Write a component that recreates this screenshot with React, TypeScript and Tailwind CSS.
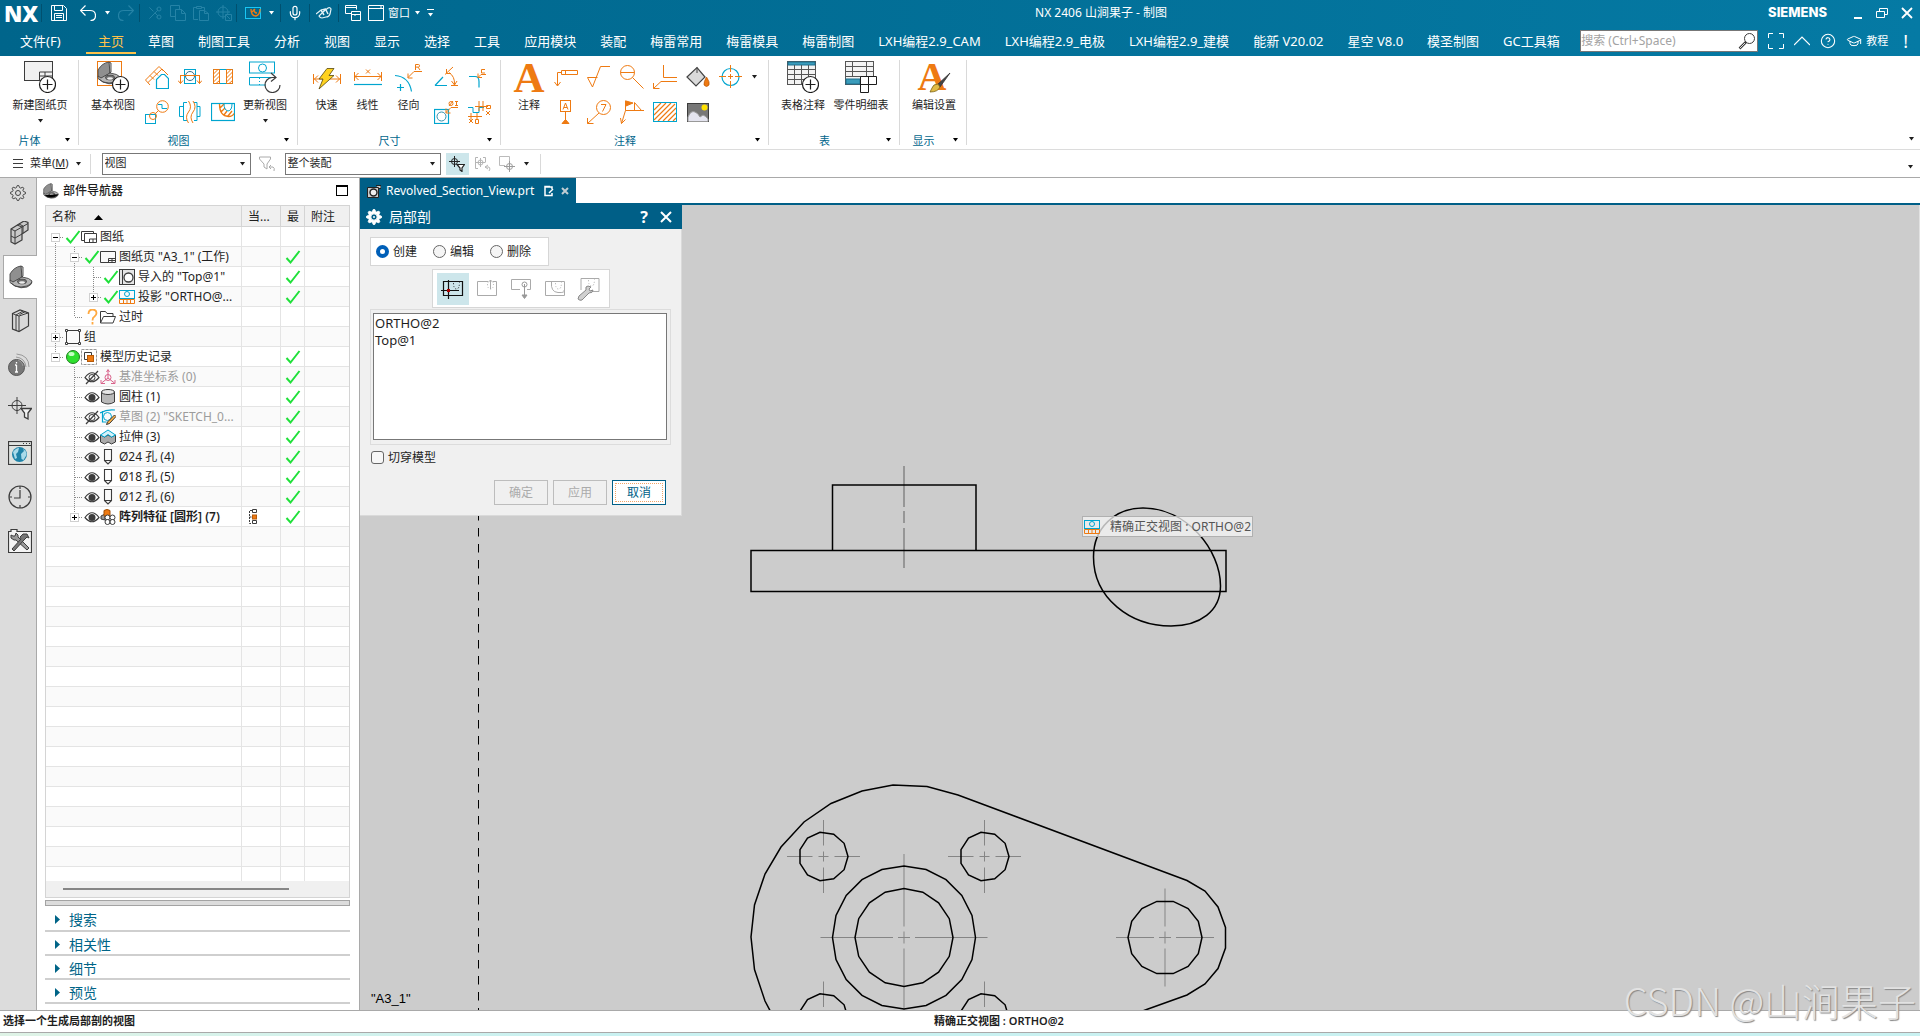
import React, { useState } from 'react';
import { Scissors, Mic, GraduationCap, CircleHelp } from 'lucide-react';

const ORANGE = '#ee7a12';
const BLUE = '#00a5cf';
const DARK = '#3c3c3c';

type SvgProps = { w?: number; h?: number; c?: string; className?: string; children: React.ReactNode };

const Svg: React.FC<SvgProps> = ({ w = 24, h = 24, c = DARK, className, children }) => (
  <svg width={w} height={h} viewBox={`0 0 ${w} ${h}`} fill="none" stroke={c} className={className ?? 'shrink-0'} aria-hidden="true">
    {children}
  </svg>
);

const Arrow: React.FC<{ className?: string }> = ({ className }) => (
  <svg width="7" height="4" viewBox="0 0 7 4" className={`shrink-0 ${className ?? ''}`} aria-hidden="true">
    <path d="M1 0h5L3.5 3.5z" fill="currentColor" />
  </svg>
);

// eight-toothed cog outline around (8, 8)
const cogPoints = Array.from({ length: 32 }, (_, i) => {
  const a = ((i - 0.5) * Math.PI) / 16;
  const r = i % 4 < 2 ? 7.5 : 5.6;
  return `${(8 + r * Math.cos(a)).toFixed(1)},${(8 + r * Math.sin(a)).toFixed(1)}`;
}).join(' ');

const Gear: React.FC<{ solid?: boolean }> = ({ solid }) => (
  <Svg w={16} h={16} c="currentColor">
    <polygon points={cogPoints} fill={solid ? 'currentColor' : 'none'} />
    <circle cx="8" cy="8" r={solid ? 3.2 : 2.5} fill={solid ? '#005f87' : 'none'} />
    {solid && <circle cx="8" cy="8" r="1" fill="currentColor" stroke="none" />}
  </Svg>
);

const PartShape: React.FC = () => (
  <g stroke="#444" strokeWidth="0.9" strokeLinejoin="round">
    <path d="M1 9Q5 2 12 1l1 1v10L4 17.5l-3-2z" fill="#8f8f8f" />
    <path d="M12 1l2 1v9l-1 1z" fill="#d5d5d5" />
    <path d="M1 15l3 2 9-5q8 1 10 4 0 4-5 6-6 2-12-1l-5-3.5z" fill="#b5b5b5" />
    <ellipse cx="13" cy="16.5" rx="4.5" ry="2.3" fill="#707070" />
    <ellipse cx="13" cy="17.5" rx="3" ry="1.2" fill="#eee" stroke="none" />
    <path d="M2 18l4 3q6 2 12 0 5-2 5-4" />
  </g>
);

const PlusCircle: React.FC = () => (
  <g stroke="#1c1c1c" strokeWidth="1.2">
    <circle cx="23.5" cy="23.5" r="8" fill="#fff" />
    <path d="M18.5 23.5h10M23.5 18.5v10" />
  </g>
);

/* ---------- ribbon icons ---------- */

const NewSheetIcon = () => (
  <Svg w={32} h={32}>
    <rect x=".5" y=".5" width="28" height="19" fill="#f1f1f1" />
    <path d="M15.5 19v-8h13M15.5 15h13M21 11v8" />
    <PlusCircle />
  </Svg>
);

const BaseViewIcon = () => (
  <Svg w={32} h={32}>
    <rect x=".5" y=".5" width="24" height="24" stroke={ORANGE} fill="#fff" />
    <PartShape />
    <PlusCircle />
  </Svg>
);

const UpdateViewIcon = () => (
  <Svg w={32} h={32} c={BLUE}>
    <rect x=".5" y="1" width="25" height="11" />
    <circle cx="13.5" cy="7" r="4" />
    <path d="M22 16.5H.5V24H17M10.5 17v1m0 2v1m0 2v1" />
    <path d="M27 16.5H23A7.5 7.5 0 1 0 31 24M22 12l5 4.5-5 4" stroke={DARK} strokeWidth="1.2" />
  </Svg>
);

const viewIcons = [
  <Svg key="a">
    <path d="M.5 15L14 1.5l4.5 4.5M.5 15l4.5 5M5 10.5l4 4M9 6.5l4 4M3 17.5L17 4l6 6" stroke={ORANGE} />
    <path d="M11.5 23.5v-9l5-5h3l4 4v10z" stroke={BLUE} fill="#fff" strokeWidth="1.2" />
  </Svg>,
  <Svg key="b">
    <rect x="6.5" y="4.5" width="11" height="14" stroke={BLUE} />
    <circle cx="12" cy="11" r="4.5" stroke="#2f6f8c" />
    <path d="M2 10.5h20M2.5 10.500v8m-2.500-3l2.500 3 2.500-3M21.500 10.500v8m-2.500-3l2.500 3 2.500-3" stroke={ORANGE} />
  </Svg>,
  <Svg key="c">
    <rect x="2.5" y="4.5" width="19" height="14" stroke={BLUE} />
    <path d="M2.5 4.5h6v14h-6zM15.5 4.5h6v14h-6zM2.5 9L7 4.5M2.5 13l6-6M2.5 17l6-6M5 18.5l3.5-3M15.5 9L20 4.500M15.5 13l6-6M15.5 17l6-6M18 18.500l3.500-3" stroke={ORANGE} />
  </Svg>,
  <Svg key="d">
    <rect x=".5" y="14.5" width="10" height="9" stroke={BLUE} />
    <circle cx="8" cy="16" r="3.5" stroke={ORANGE} />
    <circle cx="17.5" cy="6.5" r="5.8" stroke={ORANGE} />
    <path d="M10.5 13.5l3-3" stroke={ORANGE} />
    <path d="M13 4.5h4v4h5" stroke={BLUE} />
  </Svg>,
  <Svg key="e">
    <path d="M9 2.5H5.5v18H9M5.5 6.5h-4v10h4M16 2.5h3v18h-3M19 6.5h3v10h-3" stroke={BLUE} />
    <path d="M10.5 1q4 6 0 11t0 11M15 1q4 6 0 11t0 11" stroke={ORANGE} />
  </Svg>,
  <Svg key="f">
    <rect x=".5" y="3.500" width="23" height="17" stroke={BLUE} strokeWidth="1.200" />
    <path d="M8.500 4q0 12 9 12.500 4 0 5.500-3M9 8l4-4M10 12l4-4M13 15l3-4M17 16l4-5" stroke={ORANGE} strokeWidth="1.300" />
    <path d="M13 4q0 6 4 7 4-.5 4-7" stroke={BLUE} />
  </Svg>,
];

const RapidIcon = () => (
  <Svg w={28} h={32} c={ORANGE}>
    <path d="M.5 13v10M27.5 13v10M1 18h26M5 14.5L1.5 18 5 21.5M23 14.5l3.5 3.5-3.5 3.5" />
    <path d="M14 7.5h7l-5 7h5L6 28l4-10H6z" fill="#ffd21f" stroke="#55480f" strokeWidth=".8" />
  </Svg>
);

const LinearIcon = () => (
  <Svg w={28} h={32} c={ORANGE}>
    <path d="M.5 11v9M27.5 11v9M1 15.5h26M4.5 12L1 15.5 4.5 19M23.5 12l3.5 3.5-3.5 3.5M12 8.5l4 4M16 8.5l-4 4" />
    <path d="M0 23.5h28" stroke={BLUE} strokeWidth="1.2" />
  </Svg>
);

const RadialIcon = () => (
  <Svg w={28} h={32} c={ORANGE}>
    <path d="M27 10.5h-8l-6 6M13 12.5V17h4.5M20.500 9V3.500h3q1 0 1 1.300t-1 1.300h-3m2.500 0L25 9" />
    <path d="M0 14.5q14 1 16.500 16M2 26.500h7M5.500 23v7" stroke={BLUE} strokeWidth="1.2" />
  </Svg>
);

const dimensionIcons = [
  <Svg key="a" c={ORANGE}>
    <path d="M1 20.5h12M1 20.5L9 12" stroke={BLUE} strokeWidth="1.2" />
    <path d="M11 9.5L19 2M12.5 4v4.500H17M17 20.500h7M15 7.500q6 4 5.500 12M17.500 16l3 4 2.500-4" />
  </Svg>,
  <Svg key="b" c={ORANGE}>
    <path d="M2 11.5h6q4 0 4 5v6" stroke={BLUE} strokeWidth="1.2" />
    <path d="M19 9.500h-5l-3 3M11 8.500v4h4M18 4.500h-3.500v3.500H18" />
  </Svg>,
  <Svg key="c" c={ORANGE}>
    <rect x=".5" y="9.5" width="14" height="14" stroke={BLUE} strokeWidth="1.2" />
    <circle cx="7.5" cy="16.5" r="4.5" stroke="#2f8fae" />
    <path d="M24 7.5h-7l-5 5M12 8.500V13h4.500M21 1.500h3M22.500 1.500v4M21 5.500h3M15 6l4-5" />
    <circle cx="17" cy="3.500" r="2" />
  </Svg>,
  <Svg key="d" c={ORANGE}>
    <path d="M1 7.5h5v5h6v-5h5" stroke={BLUE} />
    <path d="M12 1v10M8 6.5h13M16 1v10M1 16.5h14M4 13v7M10 13v7M2 19l4 4M6 19l-4 4M8.5 19.500h3v4h-3zM19.500 5.500h4v3h-4zM19 11l4 4M23 11l-4 4" />
  </Svg>,
];

const BigAIcon = () => (
  <svg width="32" height="32" viewBox="0 0 32 32" className="shrink-0 overflow-visible" aria-hidden="true">
    <text x="16" y="31" fontSize="43" textAnchor="middle" fill={ORANGE} className="font-['Liberation_Serif',serif] font-bold">A</text>
  </svg>
);

const noteIcons = [
  <Svg key="a" c={ORANGE}>
    <path d="M7.5 5.5h16v4h-16zM11.5 5.5v4M7.5 7.500h-4v13M.5 17l3 4 3-4" />
  </Svg>,
  <Svg key="b" c={ORANGE}>
    <path d="M.5 12.500h10M.5 12.500L5.500 22l8-20.500H23" />
  </Svg>,
  <Svg key="c" c={ORANGE}>
    <circle cx="7.5" cy="7.5" r="7" />
    <path d="M.5 7.5h14M12.5 12.500l11 11" />
  </Svg>,
  <Svg key="d" c={ORANGE}>
    <path d="M10.5 0v12.500H24M24 16.500H8l-7.500 7M.5 18v5.500h6" />
  </Svg>,
  <Svg key="e" c="#444">
    <path d="M1 12l10-9.500 8 9.500-9 9z" fill="#d9d9d9" strokeWidth="1.2" />
    <path d="M11 8V2.500" />
    <path d="M20.500 12q3.500 5 2.500 8-2.500 3-5 0-.5-3 2.500-8z" fill={ORANGE} stroke="#b9570a" strokeWidth=".7" />
  </Svg>,
  <Svg key="f" c={ORANGE}>
    <circle cx="11.5" cy="12" r="8.500" stroke={BLUE} strokeWidth="1.2" />
    <path d="M11.5 0v7M11.5 16v7M0 11.500h7M16 11.500h7M11.500 9v5M9 11.500h5" />
  </Svg>,
  <Svg key="g" c={ORANGE}>
    <rect x="6.5" y=".5" width="10" height="11" />
    <path d="M11.5 11.500v9M9 9.500l2.500-6.500L14 9.500M10 7.500h3" />
    <path d="M8 23.500l3.500-4 3.500 4z" fill={ORANGE} />
  </Svg>,
  <Svg key="h" c={ORANGE}>
    <circle cx="16.500" cy="7.500" r="7" />
    <path d="M12 13L.5 23.500M.5 18v5.500h6M14 4.500h5L15.500 11.500" />
  </Svg>,
  <Svg key="i" c={ORANGE}>
    <path d="M6 1l7 2-7 3z" fill={ORANGE} />
    <path d="M5.500 .5v10l-4 13M.5 18l1 5.500 4-4M5.500 10.500H24M14.500 10V2.500l7 8" />
  </Svg>,
  <Svg key="j" c={ORANGE}>
    <path d="M1 10l7-7M1 15L13 3M1 20L18 3M5 21L22 4M10 21L23 8M15 21l8-8M20 21l3-3" strokeWidth="1.100" />
    <rect x=".5" y="2.500" width="23" height="19" stroke={BLUE} />
  </Svg>,
  <Svg key="k">
    <rect x="1.500" y="3.500" width="21" height="18" fill="#777" />
    <path d="M2 17q3-7 7-5 3 1 5 5l3-2q3 1 5 4v2.500H2z" fill="#e4e4ef" stroke="#999" />
    <circle cx="18.500" cy="7.500" r="3" fill="#ffe100" stroke="none" />
  </Svg>,
];

const TableNoteIcon = () => (
  <Svg w={32} h={32} c="#555">
    <rect x=".5" y=".5" width="28" height="23" fill="#f3f3f3" />
    <rect x="1" y="1" width="27" height="3" fill="#3a9cbb" stroke="#1d6f8e" />
    <path d="M1 8.500h28M1 13.500h28M1 18.500h28M7.500 4v19M14.500 4v19M21.500 4v19" />
    <PlusCircle />
  </Svg>
);

const PartsListIcon = () => (
  <Svg w={32} h={32} c="#555">
    <rect x=".5" y=".5" width="28" height="23" fill="#f3f3f3" />
    <path d="M1 5.500h28M1 10.500h28M1 15.500h28M7.500 0v16M21.500 0v16" />
    <rect x="1" y="18" width="14" height="5" fill="#3a9cbb" stroke="#1d6f8e" />
    <path d="M15.500 15.500h16v8h-8v8h-8zM15.500 23.500h8M23.500 15.500v8" stroke="#1c1c1c" fill="#fff" />
  </Svg>
);

const EditSettingsIcon = () => (
  <svg width="32" height="32" viewBox="0 0 32 32" className="shrink-0 overflow-visible" aria-hidden="true">
    <text x="14" y="29" fontSize="40" textAnchor="middle" fill={ORANGE} className="font-['Liberation_Serif',serif] font-bold">A</text>
    <path d="M32 12L19 24l3 2z" fill="#444" stroke="#333" strokeWidth=".8" />
    <path d="M20 23q-5 0-6 4l-2 4q8 0 10-5z" fill="#e0bb45" stroke="#7a6215" strokeWidth=".8" />
  </svg>
);

/* ---------- ribbon ---------- */

const BigButton: React.FC<{ icon: React.ReactNode; label: string; width: string; menu?: boolean }> = ({ icon, label, width, menu }) => (
  <button type="button" className={`flex shrink-0 flex-col items-center ${width}`}>
    {icon}
    <span className="mt-1 whitespace-nowrap text-[11px] leading-4">{label}</span>
    {menu && <Arrow className="mt-1.5" />}
  </button>
);

const IconGrid: React.FC<{ icons: React.ReactNode[]; cols: string }> = ({ icons, cols }) => (
  <div className={`grid content-start gap-y-[11px] pt-1 ${cols}`}>
    {icons.map((icon, i) => (
      <button key={i} type="button" className="flex w-[33px] justify-center">{icon}</button>
    ))}
  </div>
);

const Group: React.FC<{ title: string; width: string; children: React.ReactNode }> = ({ title, width, children }) => (
  <section className={`my-1 flex shrink-0 flex-col border-r border-[#d9d9d9] ${width}`}>
    <div className="flex flex-1 pt-px">{children}</div>
    <div className="flex h-2.5 items-center text-[11px] leading-none text-[#00668c]">
      <span className="flex-1 text-center">{title}</span>
      <button type="button" className="mr-[3px] flex h-2.5 w-4 items-center justify-center text-black" aria-label={title}>
        <Arrow />
      </button>
    </div>
  </section>
);

const Ribbon: React.FC = () => (
  <div className="flex h-[94px] border-b border-[#dcdcdc] bg-white">
    <Group title="片体" width="w-[79px]">
      <BigButton icon={<NewSheetIcon />} label="新建图纸页" width="w-20" menu />
    </Group>
    <Group title="视图" width="w-[219px] [&>div:first-child]:pl-[7px]">
      <BigButton icon={<BaseViewIcon />} label="基本视图" width="w-[54px]" />
      <IconGrid icons={viewIcons} cols="grid-cols-3" />
      <BigButton icon={<UpdateViewIcon />} label="更新视图" width="w-[52px]" menu />
    </Group>
    <Group title="尺寸" width="w-[203px] [&>div:first-child]:pl-2">
      <BigButton icon={<RapidIcon />} label="快速" width="w-[41px]" />
      <BigButton icon={<LinearIcon />} label="线性" width="w-[41px]" />
      <BigButton icon={<RadialIcon />} label="径向" width="w-[41px]" />
      <IconGrid icons={dimensionIcons} cols="grid-cols-2" />
    </Group>
    <Group title="注释" width="w-[268px] [&>div:first-child]:pl-2">
      <BigButton icon={<BigAIcon />} label="注释" width="w-10" />
      <IconGrid icons={noteIcons} cols="grid-cols-6" />
      <button type="button" className="flex h-8 w-[14px] items-center justify-center" aria-label="更多"><Arrow /></button>
    </Group>
    <Group title="表" width="w-[131px] [&>div:first-child]:pl-[5px]">
      <BigButton icon={<TableNoteIcon />} label="表格注释" width="w-[58px]" />
      <BigButton icon={<PartsListIcon />} label="零件明细表" width="w-[58px]" />
    </Group>
    <Group title="显示" width="w-[67px] [&>div:first-child]:pl-[5px]">
      <BigButton icon={<EditSettingsIcon />} label="编辑设置" width="w-[58px]" />
    </Group>
    <button type="button" className="mr-[5px] mb-2 ml-auto self-end" aria-label="功能区选项"><Arrow /></button>
  </div>
);

/* ---------- title bar ---------- */

const Sep: React.FC<{ className: string }> = ({ className }) => <span className={`h-[18px] w-px shrink-0 bg-[#00506f] ${className}`} />;

const TitleBar: React.FC = () => (
  <div className="flex h-[26px] items-center text-white">
    <span className="ml-1 w-8 font-['Open_Sans',sans-serif] text-[22px] leading-6 font-extrabold">NX</span>
    <Sep className="ml-[5px]" />
    <button type="button" className="ml-[9px]" aria-label="保存">
      <Svg w={16} h={16} c="#fff"><path d="M.5 .5h12l3 3v12H.5zM3.500 .5v5h8v-5M3.500 15.500v-7h9v7M5 10.500h6M5 12.500h6" /></Svg>
    </button>
    <button type="button" className="ml-[13px]" aria-label="撤销">
      <Svg w={16} h={16} c="#fff"><path d="M5.500 .5l-5 5 5 5M1 5.500h9q5.500 0 5.500 5t-5 5" strokeWidth="1.2" /></Svg>
    </button>
    <Arrow className="ml-2" />
    <button type="button" className="ml-[7px]" aria-label="重做">
      <Svg w={16} h={16} c="#2583a6"><path d="M10.500 .5l5 5-5 5M15 5.500H6q-5.500 0-5.500 5t5 5" strokeWidth="1.2" /></Svg>
    </button>
    <Sep className="ml-[5px]" />
    <div className="ml-[7px] flex gap-[7px] text-[#2583a6]">
      <button type="button" aria-label="剪切"><Scissors size={16} strokeWidth={1.5} className="rotate-180" /></button>
      <button type="button" aria-label="复制">
        <Svg w={16} h={16} c="currentColor"><path d="M5.500 11.500h-5V.5h9v4M5.500 4.500h6l4 4v7h-10zM11.500 4.500v4h4" /></Svg>
      </button>
      <button type="button" aria-label="粘贴">
        <Svg w={16} h={16} c="currentColor"><path d="M5 14.500H.5v-12h3M8 2.500h3.500v3M3.500 1.500h5v2h-5zM6.500 5.500h5l4 3v7h-9zM11.500 5.500v3h4" /></Svg>
      </button>
      <button type="button" aria-label="移动对象">
        <Svg w={16} h={16} c="currentColor"><circle cx="7" cy="7" r="5" /><path d="M7 0v14M0 7h14M9.500 9.500h6v6h-6zM11 11l3 3" /></Svg>
      </button>
    </div>
    <Sep className="ml-[4px]" />
    <button type="button" className="ml-2" aria-label="剖视图">
      <Svg w={16} h={16} c="#19c6f4"><rect x=".5" y="2.500" width="15" height="11" /><path d="M6 4q0 7 5 7 4-1 4-7M9 4q0 4 3 4M7 7l3-3" stroke={ORANGE} strokeWidth="1.400" /></Svg>
    </button>
    <Arrow className="ml-[7px]" />
    <Sep className="ml-[5px]" />
    <button type="button" className="ml-[6px]" aria-label="语音"><Mic size={16} strokeWidth={1.8} /></button>
    <Sep className="ml-[6px]" />
    <button type="button" className="ml-[6px]" aria-label="触控">
      <Svg w={16} h={16} c="#e4f2f6"><path d="M0 9l5-4 4-1-2 3 5-4q2-1 3 1l-1 5q-1 3-4 3l-4 1q-2 0-3-2l3-3" strokeWidth="1.2" /><path d="M5 5l3 5M10 5l2 4" strokeWidth="1.5" /></Svg>
    </button>
    <Sep className="ml-[6px]" />
    <button type="button" className="ml-[6px]" aria-label="层叠窗口">
      <Svg w={16} h={16} c="#fff"><path d="M7 8.500H.5v-8h11v4M.5 2.500h11M6.500 15.500v-9h9v9zM6.500 9.500h9M10 11v-2" /></Svg>
    </button>
    <button type="button" className="ml-[7px] flex items-center gap-1 text-[11px]">
      <Svg w={16} h={16} c="#fff"><path d="M.5 .5h15v15H.5zM.5 3.500h15M12 2h2" /></Svg>
      窗口
      <Arrow />
    </button>
    <button type="button" className="ml-[6px] flex flex-col items-center gap-[3px]" aria-label="自定义">
      <span className="h-px w-[7px] bg-white" />
      <Arrow />
    </button>
    <h1 className="flex-1 text-center text-xs">NX 2406 山涧果子 - 制图</h1>
    <span className="mr-[27px] font-['Inter',sans-serif] text-[13px] font-extrabold">SIEMENS</span>
    <div className="mr-[7px] flex gap-[13px]">
      <button type="button" aria-label="最小化"><Svg w={9} h={12} c="#fff"><path d="M0 11h8" strokeWidth="2" /></Svg></button>
      <button type="button" aria-label="还原"><Svg w={12} h={12} c="#fff"><path d="M3.500 4V1.500h8v6H9M.5 4.500h8v6h-8z" /></Svg></button>
      <button type="button" aria-label="关闭"><Svg w={12} h={12} c="#fff"><path d="M1 1l10 10M11 1L1 11" strokeWidth="1.8" /></Svg></button>
    </div>
  </div>
);

const tabs = [
  '草图', '制图工具', '分析', '视图', '显示', '选择', '工具', '应用模块', '装配', '梅雷常用', '梅雷模具', '梅雷制图',
  'LXH编程2.9_CAM', 'LXH编程2.9_电极', 'LXH编程2.9_建模', '能新 V20.02', '星空 V8.0', '模圣制图', 'GC工具箱',
];

const TabBar: React.FC = () => (
  <nav className="flex h-[30px] items-start whitespace-nowrap text-[13px] leading-[30px] text-white">
    <a href="#file" className="w-[86px] pl-5">文件(F)</a>
    <a href="#home" className="h-7 border-b-2 border-[#ffc24a] px-3 text-[#ffc24a]">主页</a>
    {tabs.map((tab) => (
      <a key={tab} href={`#${tab}`} className="px-3">{tab}</a>
    ))}
    <div className="ml-auto flex h-[30px] items-center pr-3">
      <label className="flex h-[22px] w-[178px] items-center border border-[#777] bg-white pr-px">
        <input type="search" aria-label="搜索" placeholder="搜索 (Ctrl+Space)" className="min-w-0 flex-1 text-xs text-black outline-none placeholder:text-[#a3a3a3]" />
        <Svg w={18} h={18}><circle cx="11.500" cy="6.500" r="5" /><path d="M8 10l-6.500 6.500" strokeWidth="2.500" /><path d="M7 11l-5 5" stroke="#ddd" /></Svg>
      </label>
      <button type="button" className="ml-[10px]" aria-label="全屏">
        <Svg w={16} h={16} c="#fff"><path d="M.5 5V.5H5M11 .5h4.500V5M15.500 11v4.500H11M5 15.500H.5V11" /></Svg>
      </button>
      <button type="button" className="ml-[10px]" aria-label="折叠功能区">
        <Svg w={16} h={16} c="#fff"><path d="M0 12l8-8 8 8" strokeWidth="1.2" /></Svg>
      </button>
      <button type="button" className="ml-[10px]" aria-label="帮助"><CircleHelp size={16} strokeWidth={1.6} /></button>
      <button type="button" className="ml-[10px] flex items-center gap-1 text-[11px]">
        <GraduationCap size={16} strokeWidth={1.5} />
        教程
      </button>
      <span className="ml-[15px] text-lg">!</span>
    </div>
  </nav>
);

/* ---------- selection bar ---------- */

const Combo: React.FC<{ label: string; value: string; width: string }> = ({ label, value, width }) => (
  <div className={`relative flex h-[22px] items-center ${width}`}>
    <select aria-label={label} defaultValue={value} className="h-full w-full appearance-none border border-[#777] bg-white pl-0.5 text-[11px]">
      <option>{value}</option>
    </select>
    <Arrow className="pointer-events-none absolute right-[5px]" />
  </div>
);

const SelectionBar: React.FC = () => (
  <div className="flex h-[28px] items-center border-b border-[#a9a9a9] bg-white text-[11px]">
    <button type="button" className="ml-[13px] flex items-center">
      <Svg w={10} h={10}><path d="M0 .5h10M0 4.500h10M0 8.500h10" /></Svg>
      <span className="ml-[7px]">菜单(<u>M</u>)</span>
      <Arrow className="ml-1.5" />
    </button>
    <span className="ml-2 h-5 w-px bg-[#d9d9d9]" />
    <div className="ml-[11px]"><Combo label="类型过滤器" value="视图" width="w-[149px]" /></div>
    <button type="button" className="ml-2" aria-label="重置过滤器">
      <Svg w={17} h={16} c="#aaa"><path d="M.5 1h11v2L8 8v5l-3-2V8L.5 3z" /><path d="M10 11l2-2m-2 2l2 2m-2-2h4q2 1 1 4" /></Svg>
    </button>
    <div className="ml-[9px]"><Combo label="选择范围" value="整个装配" width="w-[156px]" /></div>
    <button type="button" className="ml-[5px] flex h-[22px] w-[23px] items-center justify-center bg-[#cde6eb]" aria-label="选择过滤">
      <Svg w={16} h={16} c="#222"><circle cx="5.500" cy="5.500" r="3" /><path d="M5.500 0v11M0 5.500h11" /><path d="M8 8.500h7.500L13 12v3.500L11 14v-2z" fill="#fff" strokeWidth="1.2" /></Svg>
    </button>
    <button type="button" className="ml-1.5" aria-label="点捕捉">
      <Svg w={16} h={16} c="#b5b5b5"><path d="M3 1.500H.5v11H3M8 1.500h2.500v5" /><circle cx="5.500" cy="6.500" r="2.500" /><path d="M5.500 2v9M1 6.500h9M10 11l3-2m-3 2l3 2M10 11h4q2 2 0 4" /></Svg>
    </button>
    <button type="button" className="ml-2" aria-label="坐标捕捉">
      <Svg w={16} h={16} c="#9b9b9b"><path d="M6 9.500H.5V.5h10V6" stroke="#bbb" /><circle cx="10.500" cy="10.500" r="3" /><path d="M10.500 5v11M5 10.500h11" /></Svg>
    </button>
    <Arrow className="ml-2" />
    <span className="ml-2.5 h-5 w-px bg-[#d9d9d9]" />
    <Arrow className="mt-1.5 mr-1.5 ml-auto" />
  </div>
);

/* ---------- resource rail ---------- */

const railIcons = [
  {
    name: '装配导航器',
    icon: (
      <Svg>
        <path d="M3 8l8-5 5-3 4 1.500V9l-6 4v6l-7 4-4-2z" fill="#c9c9c9" strokeWidth="1.2" />
        <path d="M3 8l4 2 7-4 6-3.500M7 10v13M11 3l4 2v7M3 15l4 2 7-4M9 4l5 2v7" />
      </Svg>
    ),
  },
  { name: '部件导航器', icon: <Svg><PartShape /></Svg>, active: true },
  {
    name: '重用库',
    icon: (
      <Svg>
        <path d="M4.500 4.500L12 1l8.500 3v13L11 22.500 4.500 20z" fill="#d8d8d8" strokeWidth="1.2" />
        <path d="M4.500 4.500L8 6v15M8 6l7-4M11 7v15M11 7l9-3M8 6l3 1M11.500 5.500l6-3" />
      </Svg>
    ),
  },
  {
    name: '信息',
    icon: (
      <Svg>
        <circle cx="8.500" cy="14.500" r="8" fill="#777" stroke="#555" />
        <path d="M8.500 12v7M7 12h1.500M7 19h3M8.500 9v1.500" stroke="#fff" strokeWidth="1.3" />
        <path d="M8 4q9 1 10 10M8.500 1Q21 2 21 14M10 7q5 2 5 6" stroke="#999" />
      </Svg>
    ),
  },
  { name: '选择过滤器', icon: <Svg><circle cx="9" cy="8.500" r="5" /><path d="M9 0v17M0 8.500h18" /><path d="M13 11.500h10.500L20 16v6l-3.500-2v-4z" fill="#f2f2f2" strokeWidth="1.3" /></Svg> },
  {
    name: 'Web 浏览器',
    icon: (
      <Svg>
        <rect x=".5" y=".5" width="23" height="23" fill="#dfe3e0" strokeWidth="1.2" />
        <path d="M.5 4.500h23M15 2.500h1M18 2.500h1M21 2.500h1" />
        <circle cx="11.500" cy="13.500" r="7.500" fill="#1f83a8" stroke="none" />
        <path d="M5 11q3-4 6-4l-1 4-2 2 1 4-2 1zM13 13l3-3-1-2q4 2 3.500 6l-3 5-2-1z" fill="#a9dbea" stroke="none" />
      </Svg>
    ),
  },
  { name: '历史记录', icon: <Svg><circle cx="12" cy="12" r="11" strokeWidth="1.2" /><path d="M12 5v8H6M12 1v3M12 20v3M1 12h3M20 12h3" strokeWidth="1.2" /></Svg> },
  {
    name: '角色',
    icon: (
      <Svg>
        <path d="M.5 23.500V2.500H3V.5h6v2h14.500v21z" fill="#f4f4f4" strokeWidth="1.2" />
        <path d="M3 6v3l3 2h2l11 10 2-2L10 8V6L8 4 7 7H5z" fill="#9a9a9a" />
        <path d="M4 20l9-10-1-2 3-3h4l2 4-2-1-3 3-10 11z" fill="#777" />
      </Svg>
    ),
  },
];

const Rail: React.FC = () => (
  <aside className="flex w-[37px] shrink-0 flex-col border-r border-[#a9a9a9] bg-[#dcdcdc]">
    <button type="button" className="flex h-[33px] items-center justify-center pb-[3px] text-[#444]" aria-label="设置">
      <Gear />
    </button>
    {railIcons.map((item) => (
      <button
        key={item.name}
        type="button"
        aria-label={item.name}
        className={`ml-[3px] flex h-11 items-center justify-center ${item.active ? '-mr-px border border-r-0 border-[#a9a9a9] bg-white' : ''}`}
      >
        {item.icon}
      </button>
    ))}
  </aside>
);

/* ---------- part navigator ---------- */

// v: line, t: tee, l: elbow, f/m/n: minus box (first/middle/last), p/q: plus box (middle/last)
const Guide: React.FC<{ kind: string }> = ({ kind }) => {
  const up = 'vtlmnpq'.includes(kind);
  const down = 'vtfmp'.includes(kind);
  const right = 'tlfmnpq'.includes(kind);
  const box = 'fmnpq'.includes(kind);
  return (
    <Svg w={19} h={20} c="#8a8a8a">
      <g strokeDasharray="1 1">
        {up && <path d="M9.500 0v10" />}
        {down && <path d="M9.500 10v10" />}
        {right && <path d="M10 10.500h8" />}
      </g>
      {box && <rect x="5.500" y="6.500" width="8" height="8" fill="#fff" stroke="#d0d0d0" />}
      {box && <path d="M7 10.500h5" stroke="#000" />}
      {'pq'.includes(kind) && <path d="M9.500 8v5" stroke="#000" />}
    </Svg>
  );
};

const Check: React.FC = () => (
  <Svg w={16} h={16} c="#1fe03a"><path d="M1.500 9l4 4.500L14.500 2" strokeWidth="2" /></Svg>
);

const Eye: React.FC<{ off?: boolean }> = ({ off }) => (
  <Svg w={16} h={16}>
    <path d="M1 8.500Q8 -1 15 8.500Q8 17 1 8.500z" strokeWidth="1.200" />
    <circle cx="8" cy="8.500" r={off ? 3 : 3.500} fill={off ? 'none' : DARK} stroke={off ? DARK : 'none'} />
    {off && <path d="M2 15L14 2" strokeWidth="1.200" />}
  </Svg>
);

const markers: Record<string, React.ReactNode> = {
  check: <Check />,
  eye: <Eye />,
  off: <Eye off />,
  ball: <Svg w={16} h={16}><circle cx="8" cy="8" r="6.500" fill="#2fe02f" stroke="#1f7f1f" /><ellipse cx="6.500" cy="5" rx="3" ry="2" fill="#c6ffc6" stroke="none" /></Svg>,
  question: <Svg w={16} h={16} c="#ffa940"><path d="M4.500 5q0-4.500 4-4.500T12.500 4q0 2-2 3.500-2 1-2 4M8.500 13v2.500" strokeWidth="1.800" /></Svg>,
};

const OrthoIcon: React.FC = () => (
  <Svg w={16} h={16} c={BLUE}>
    <rect x=".5" y="1.500" width="15" height="8" />
    <circle cx="8" cy="5" r="2.500" />
    <path d="M.5 10.500h15v4H.5zM4.500 11v3M8 11v3M11.500 11v3" stroke={ORANGE} />
  </Svg>
);

const treeIcons: Record<string, React.ReactNode> = {
  sheets: <Svg w={16} h={16}><path d="M3 11.500H.5v-9h12v2M3.500 4.500h12v9h-12zM8.500 13v-3h7M12 10v3" /></Svg>,
  sheet: <Svg w={16} h={16}><path d="M.5 2.500h15v11H.5zM8.500 13V9.500h7M8.500 11.500h7M12 9v4" /></Svg>,
  imported: <Svg w={16} h={16}><rect x=".5" y=".5" width="15" height="15" fill="#e6e6e6" /><path d="M3.500 1v14" /><circle cx="9.500" cy="8.500" r="4.500" fill="#fff" strokeWidth="1.300" /></Svg>,
  ortho: <OrthoIcon />,
  folder: <Svg w={16} h={16}><path d="M.5 14V2.500h5l1.500 2h6v3M.5 14l3-6.500h12L13 14z" /></Svg>,
  group: <Svg w={16} h={16}><path d="M1.500 1.500h13v13h-13z" /><path d="M.5 .5h2v2h-2zM13.500 .5h2v2h-2zM.5 13.500h2v2h-2zM13.500 13.500h2v2h-2z" fill="#fff" /></Svg>,
  history: (
    <Svg w={16} h={16}>
      <path d="M.5 .5h15v15H.5z" stroke="#999" strokeDasharray="3 1" />
      <path d="M3.500 3.500h7v7h-7z" fill="#fff" />
      <rect x="6.500" y="6.500" width="6" height="6" fill={ORANGE} stroke="#b55a08" />
    </Svg>
  ),
  csys: <Svg w={16} h={16} c="#d9628a"><circle cx="8" cy="8.500" r="3" /><path d="M8 1v8l-6.500 5M8 9l6.500 5M6.500 3L8 .5 9.500 3M1 11v3.500h4M15 11v3.500h-4" /></Svg>,
  cylinder: <Svg w={16} h={16}><path d="M1.500 3v10q6.500 4 13 0V3" fill="#b9b9b9" /><ellipse cx="8" cy="3" rx="6.500" ry="2.500" fill="#e6e6e6" /></Svg>,
  sketch: <Svg w={16} h={16} c={BLUE}><path d="M0 4q7-4 15-3M2.500 2v11h4" strokeWidth="1.200" /><circle cx="7.500" cy="7.500" r="4" /><path d="M14.500 6l-7 7-1 2.500 3-1 6.500-7z" fill="#ffb347" stroke="#333" /></Svg>,
  extrude: <Svg w={16} h={16}><path d="M.5 6v7l4 2 3.500-2 3.500 2 4-2V6l-4 2L8 6 4.500 8z" fill="#aaa" /><path d="M.5 6L8 1l7.500 5-4 2L8 5.500 4.500 8z" fill="#d6f2fa" stroke={BLUE} /></Svg>,
  hole: <Svg w={16} h={16}><path d="M4.500 .5h7v11h-7zM4.500 11.500L8 15l3.500-3.500" strokeWidth="1.100" /></Svg>,
  pattern: (
    <Svg w={16} h={16}>
      <path d="M1 7l4-2v6l-4-1z" fill="#999" />
      <path d="M4 1.500q3-2 6 0V7H4z" fill={ORANGE} stroke="#a04f05" />
      <circle cx="7.500" cy="8.500" r="2.500" fill="#fff" />
      <circle cx="12.500" cy="8.500" r="2.500" fill="#fff" />
      <circle cx="7.500" cy="13" r="2.500" fill="#fff" />
      <circle cx="12.500" cy="13" r="2.500" fill="#fff" />
    </Svg>
  ),
};

type Row = { guides: string; marker?: string; icon: string; label: string; check?: boolean; dim?: boolean; bold?: boolean };

const treeRows: Row[] = [
  { guides: 'f', marker: 'check', icon: 'sheets', label: '图纸' },
  { guides: 'vm', marker: 'check', icon: 'sheet', label: '图纸页 "A3_1" (工作)', check: true },
  { guides: 'vvt', marker: 'check', icon: 'imported', label: '导入的 "Top@1"', check: true },
  { guides: 'vvq', marker: 'check', icon: 'ortho', label: '投影 "ORTHO@...', check: true },
  { guides: 'vl', marker: 'question', icon: 'folder', label: '过时' },
  { guides: 'p', icon: 'group', label: '组' },
  { guides: 'n', marker: 'ball', icon: 'history', label: '模型历史记录', check: true },
  { guides: ' t', marker: 'off', icon: 'csys', label: '基准坐标系 (0)', check: true, dim: true },
  { guides: ' t', marker: 'eye', icon: 'cylinder', label: '圆柱 (1)', check: true },
  { guides: ' t', marker: 'off', icon: 'sketch', label: '草图 (2) "SKETCH_0...', check: true, dim: true },
  { guides: ' t', marker: 'eye', icon: 'extrude', label: '拉伸 (3)', check: true },
  { guides: ' t', marker: 'eye', icon: 'hole', label: 'Ø24 孔 (4)', check: true },
  { guides: ' t', marker: 'eye', icon: 'hole', label: 'Ø18 孔 (5)', check: true },
  { guides: ' t', marker: 'eye', icon: 'hole', label: 'Ø12 孔 (6)', check: true },
  { guides: ' q', marker: 'eye', icon: 'pattern', label: '阵列特征 [圆形] (7)', check: true, bold: true },
];

const emptyRows = Array.from({ length: 40 }, (_, i) => i);
const cell = 'h-5 border-b border-r border-[#e4e4e4] p-0';
const head = 'h-[21px] border-b border-r border-[#d4d4d4] p-0 pt-0.5 text-left font-normal';

const Navigator: React.FC = () => (
  <section className="flex w-[322px] shrink-0 flex-col bg-white pr-[9px] pl-2">
    <header className="flex h-[27px] shrink-0 items-center pb-0.5 text-xs">
      <svg width="16" height="16" viewBox="0 0 24 24" className="-ml-0.5 shrink-0" aria-hidden="true"><PartShape /></svg>
      <h2 className="ml-1 font-medium">部件导航器</h2>
      <button type="button" className="mr-0.5 ml-auto h-[11px] w-3 border border-t-2 border-black" aria-label="停靠" />
    </header>
    <div className="min-h-0 flex-1 overflow-hidden border border-b-0 border-[#d4d4d4]">
      <table className="w-full table-fixed border-separate border-spacing-0 text-xs leading-[18px]">
        <colgroup>
          <col className="w-[196px]" />
          <col className="w-[39px]" />
          <col className="w-6" />
          <col />
        </colgroup>
        <thead className="bg-[#f0f0f0]">
          <tr>
            <th className={head}>
              <span className="flex items-center pl-1.5">
                名称
                <svg width="9" height="5" className="ml-[18px]" aria-hidden="true"><path d="M0 5h9L4.500 0z" /></svg>
              </span>
            </th>
            <th className={`${head} pl-1.5`}>当...</th>
            <th className={`${head} pl-1.5`}>最</th>
            <th className={`${head} border-r-0 pl-1.5`}>附注</th>
          </tr>
        </thead>
        <tbody>
          {treeRows.map((row) => (
            <tr key={row.label} className="even:bg-[#fafafa]">
              <td className={cell}>
                <div className={`flex h-[19px] items-center overflow-hidden whitespace-nowrap ${row.dim ? 'text-[#9c9c9c]' : ''} ${row.bold ? 'font-semibold' : ''}`}>
                  {row.guides.split('').map((kind, i) => <Guide key={i} kind={kind} />)}
                  {row.marker && markers[row.marker]}
                  {treeIcons[row.icon]}
                  <span className="ml-[3px]">{row.label}</span>
                </div>
              </td>
              <td className={cell}>
                {row.bold && (
                  <Svg w={16} h={16} className="ml-1.5">
                    <path d="M4 1.500H1.500v13H4M1.500 8H4" strokeDasharray="2 1" />
                    <path d="M4.500 .5h4v3h-4zM4.500 11.500h4v3h-4z" />
                    <rect x="4.500" y="6" width="4" height="4" fill={ORANGE} stroke="#b55a08" />
                  </Svg>
                )}
              </td>
              <td className={cell}>{row.check && <span className="flex justify-center"><Check /></span>}</td>
              <td className={`${cell} border-r-0`} />
            </tr>
          ))}
          {emptyRows.map((n) => (
            <tr key={n} className="even:bg-[#fafafa]">
              <td className={cell} />
              <td className={cell} />
              <td className={cell} />
              <td className={`${cell} border-r-0`} />
            </tr>
          ))}
        </tbody>
      </table>
    </div>
    <div className="flex h-[17px] shrink-0 items-center border border-t-0 border-[#d4d4d4] bg-[#f0f0f0] pl-[17px]">
      <span className="h-0.5 w-[226px] bg-[#868686]" />
    </div>
    <div className="mt-0.5 h-1.5 shrink-0 border border-[#a3a3a3] bg-[#dcdcdc]" />
    <div className="mb-[6px] shrink-0">
      {['搜索', '相关性', '细节', '预览'].map((title) => (
        <button key={title} type="button" className="flex h-6 w-full items-center border-b-2 border-[#cfcfcf] pt-[3px] pl-2.5 text-sm leading-5 text-[#006487] first:h-[26px]">
          <svg width="5" height="9" className="mr-[9px]" aria-hidden="true"><path d="M0 0l5 4.500L0 9z" fill="currentColor" /></svg>
          {title}
        </button>
      ))}
    </div>
  </section>
);

/* ---------- section dialog ---------- */

const stepIcons = [
  <Svg key="a" c="#111"><path d="M2.500 4.500h19v14h-19zM0 13.500h18M7.500 3v19" strokeWidth="1.200" /><path d="M12.500 6q0 6 3 6t3-7" strokeDasharray="1 2" /><path d="M6 12h3v3H6z" fill="#a00" stroke="none" /></Svg>,
  <Svg key="b" c="#aaa"><path d="M13 4.500H2.500v14h19v-14H18M15.500 12V3M13 5.500L15.500 3 18 5.500" /><path d="M12.500 7q0 5 3 5t3-5" strokeDasharray="1 2" /></Svg>,
  <Svg key="c" c="#999"><path d="M11 12.500H2.500v-10h19v10H18" stroke="#aaa" /><circle cx="15.500" cy="7.500" r="2.500" /><path d="M15.500 7v14M13 18l2.500 3.500L18 18z" fill="#999" /></Svg>,
  <Svg key="d" c="#aaa"><path d="M2.500 4.500h19v14h-19zM8.500 5q-1 10 6.500 10.500T21 13" /><path d="M12.500 6q0 6 3 6t3-7" strokeDasharray="1 2" /></Svg>,
  <Svg key="e" c="#aaa">
    <path d="M4 13V1.500h18v13h-8" />
    <path d="M11.500 3q0 6 3 6t3-7" strokeDasharray="1 2" />
    <path d="M1 22l1-3 7-6q-1-4 2-4l3 1-2 2 1 2 3-1q0 3-4 3l-7 7q-2 1-4-1z" fill="#d0d0d0" stroke="#888" />
  </Svg>,
];

const SectionDialog: React.FC = () => {
  const [mode, setMode] = useState('创建');
  const [step, setStep] = useState(0);
  const push = 'h-[25px] w-[54px] border text-xs leading-none';
  return (
    <div className="absolute top-0 left-0 w-[322px] border-r border-b border-[#dadada] bg-[#f0f0f0] text-xs" role="dialog" aria-label="局部剖">
      <header className="-mr-px flex h-6 items-center bg-[#005f87] pr-[10px] pl-1.5 text-sm text-white">
        <Gear solid />
        <span className="ml-[7px]">局部剖</span>
        <button type="button" className="mr-3 ml-auto text-base leading-5 font-bold" aria-label="帮助">?</button>
        <button type="button" aria-label="关闭"><Svg w={12} h={12} c="#fff"><path d="M1 1l10 10M11 1L1 11" strokeWidth="2" /></Svg></button>
      </header>
      <div className="px-[10px] pt-2 pb-[10px]">
        <div className="flex h-[29px] w-[179px] items-center border border-[#d6d6d6] bg-white pl-[5px]">
          {['创建', '编辑', '删除'].map((name) => (
            <label key={name} className="flex w-[57px] items-center gap-1 whitespace-nowrap">
              <input
                type="radio"
                name="mode"
                checked={mode === name}
                onChange={() => setMode(name)}
                className="h-[13px] w-[13px] appearance-none rounded-full border border-[#666] bg-[#f5f5f5] checked:border-4 checked:border-[#005fb8] checked:bg-white"
              />
              {name}
            </label>
          ))}
        </div>
        <div className="mt-[3px] ml-[62px] flex h-[39px] w-[178px] items-center gap-0.5 border border-[#d6d6d6] bg-white pl-1">
          {stepIcons.map((icon, i) => (
            <button key={i} type="button" onClick={() => setStep(i)} className={`flex h-8 w-8 items-center justify-center ${step === i ? 'bg-[#cde6eb]' : ''}`} aria-label={`步骤 ${i + 1}`}>
              {icon}
            </button>
          ))}
        </div>
        <div className="mt-px border border-[#dcdcdc] p-[3px] pb-1 pl-0.5">
          <select size={7} aria-label="视图列表" className="block h-[127px] w-full overflow-hidden border border-[#777] bg-white text-[13px] outline-none">
            <option className="h-[17px] min-h-0 px-px py-0 leading-[17px]">ORTHO@2</option>
            <option className="h-[17px] min-h-0 px-px py-0 leading-[17px]">Top@1</option>
          </select>
        </div>
        <label className="mt-[5px] ml-px flex h-[15px] w-fit items-center gap-1">
          <input type="checkbox" className="h-[13px] w-[13px] appearance-none rounded-[3px] border border-[#666] bg-[#f7f7f7] checked:bg-[#005fb8]" />
          切穿模型
        </label>
        <div className="mt-[15px] mr-[5px] flex justify-end gap-[5px]">
          <button type="button" disabled className={`${push} border-[#bdbdbd] text-[#ababab]`}>确定</button>
          <button type="button" disabled className={`${push} border-[#bdbdbd] text-[#ababab]`}>应用</button>
          <button type="button" className={`${push} border-[#005f87] bg-white p-0.5 text-[#005f87]`}>
            <span className="flex h-full items-center justify-center border border-dotted border-[#f0a468]">取消</span>
          </button>
        </div>
      </div>
    </div>
  );
};

/* ---------- drawing sheet ---------- */

const ngon = (cx: number, cy: number, r: number, n: number) =>
  Array.from({ length: n }, (_, i) => {
    const a = (i * 2 * Math.PI) / n;
    return `${(cx + r * Math.cos(a)).toFixed(1)},${(cy - r * Math.sin(a)).toFixed(1)}`;
  }).join(' ');

const cross = (cx: number, cy: number, l: number, s: number) =>
  `M${cx - l} ${cy}H${cx - 11}M${cx - s} ${cy}H${cx + s}M${cx + 11} ${cy}H${cx + l}` +
  `M${cx} ${cy - l}V${cy - 11}M${cx} ${cy - s}V${cy + s}M${cx} ${cy + 11}V${cy + l}`;

const holes = [[823.5, 856.5], [984.5, 856.5], [823.5, 1018], [984.5, 1018]];

const Drawing: React.FC = () => (
  <svg className="absolute inset-0 h-full w-full" aria-hidden="true">
    <g transform="translate(-360 -205)" fill="none" stroke="#000" strokeWidth="1.5">
      <path d="M478.500 512V1010" strokeDasharray="8.500 7.500" strokeWidth="1" />
      <path d="M904 466v41M904 511v12M904 528v40" stroke="#969696" strokeWidth="2" />
      <path d="M751 550.500H1226V591.500H751zM832.500 550V485H976V550" />
      <path d="M1143 508C1115 508 1093.500 528 1093.500 557C1093.500 598 1130 626 1171 626C1200 626 1220.500 611 1220.500 586C1220.500 550 1187 508 1143 508z" />
      <g stroke="#858585" strokeWidth="1">
        {holes.map(([x, y]) => <path key={`${x}-${y}`} d={cross(x, y, 36.5, 5)} />)}
        <path d={cross(904, 937.5, 83.5, 6)} />
        <path d={cross(1165, 937.5, 49, 6)} />
      </g>
      <polygon points={ngon(904, 937.5, 71.5, 20)} />
      <polygon points={ngon(904, 937.5, 49, 16)} />
      <polygon points={ngon(1165, 937.5, 37, 14)} />
      {holes.map(([x, y]) => <polygon key={`${x}-${y}`} points={ngon(x, y, 24.5, 11)} />)}
      <path d="M775 1020L765 1001L754.500 969.500L751 937L754.500 905L765 874L781 847L804 822L831 803.500L862 791L893 785L927 786.500L958 795L1187 880.500L1205 891L1218 907L1225.500 927.500V948L1218 968.500L1205 984L1187 995L1148 1009L1118 1020" />
    </g>
    <text x="11" y="798" fontSize="13" className="font-['Liberation_Sans',sans-serif]">"A3_1"</text>
  </svg>
);

const Workspace: React.FC = () => (
  <main className="flex min-w-0 flex-1 flex-col border-l border-[#a9a9a9] bg-white">
    <div className="flex h-[25px] shrink-0">
      <button type="button" className="flex w-[216px] items-center bg-[#005f87] pl-[7px] text-xs text-white">
        <Svg w={14} h={14}>
          <path d="M.5 3.500h11v10H.5zM9 1.500h5v3h-2" fill="#ccc" stroke="#222" />
          <circle cx="6.500" cy="8.500" r="3.500" fill="#eee" stroke="#222" strokeWidth="1.400" />
        </Svg>
        <span className="ml-[5px] flex-1 text-left">Revolved_Section_View.prt</span>
        <Svg w={10} h={12} c="#fff"><path d="M6 1.500H1v9h7V8M1 2h7v2M5 8l4-4" strokeWidth="1.500" /></Svg>
        <Svg w={8} h={8} c="#c0cdd3" className="mr-[7px] ml-[7px] shrink-0"><path d="M1 1l6 6M7 1L1 7" strokeWidth="2" /></Svg>
      </button>
    </div>
    <div className="h-0.5 shrink-0 bg-[#005f87]" />
    <div className="relative min-h-0 flex-1 overflow-hidden border-r border-[#e2e2e2] bg-[#ccc]">
      <Drawing />
      <div className="absolute top-[311px] left-[722px] flex h-[21px] w-[171px] items-center justify-between border border-[#b0b0b0] bg-[#f5f5f5]/75 px-px text-xs whitespace-nowrap text-[#555]" role="tooltip">
        <OrthoIcon />
        <span>精确正交视图 : ORTHO@2</span>
      </div>
      <SectionDialog />
    </div>
  </main>
);

const App: React.FC = () => (
  <div className="relative flex h-screen flex-col overflow-hidden bg-white font-['Noto_Sans','Noto_Sans_CJK_SC',sans-serif] text-[#1e1e1e]">
    <div className="shrink-0 bg-linear-to-r from-[#00658b] to-[#057aa4]">
      <TitleBar />
      <TabBar />
    </div>
    <div className="shrink-0">
      <Ribbon />
      <SelectionBar />
    </div>
    <div className="flex min-h-0 flex-1">
      <Rail />
      <Navigator />
      <Workspace />
    </div>
    <footer className="grid h-[23px] shrink-0 grid-cols-[934fr_986fr] items-center border-y border-[#a9a9a9] bg-white text-[11px] font-semibold">
      <span className="pl-[3px]">选择一个生成局部剖的视图</span>
      <span>精确正交视图 : ORTHO@2</span>
    </footer>
    <div className="h-[3px] shrink-0 bg-linear-to-r from-[#dff3e6] to-[#c9f1f1] to-30%" />
    <div className="pointer-events-none absolute right-1 bottom-4 font-['Noto_Sans_CJK_SC',sans-serif] text-[38px] leading-10 font-light text-[#e2e2e2] [text-shadow:1px_1px_1px_#888]">
      CSDN @山涧果子
    </div>
  </div>
);

export default App;
